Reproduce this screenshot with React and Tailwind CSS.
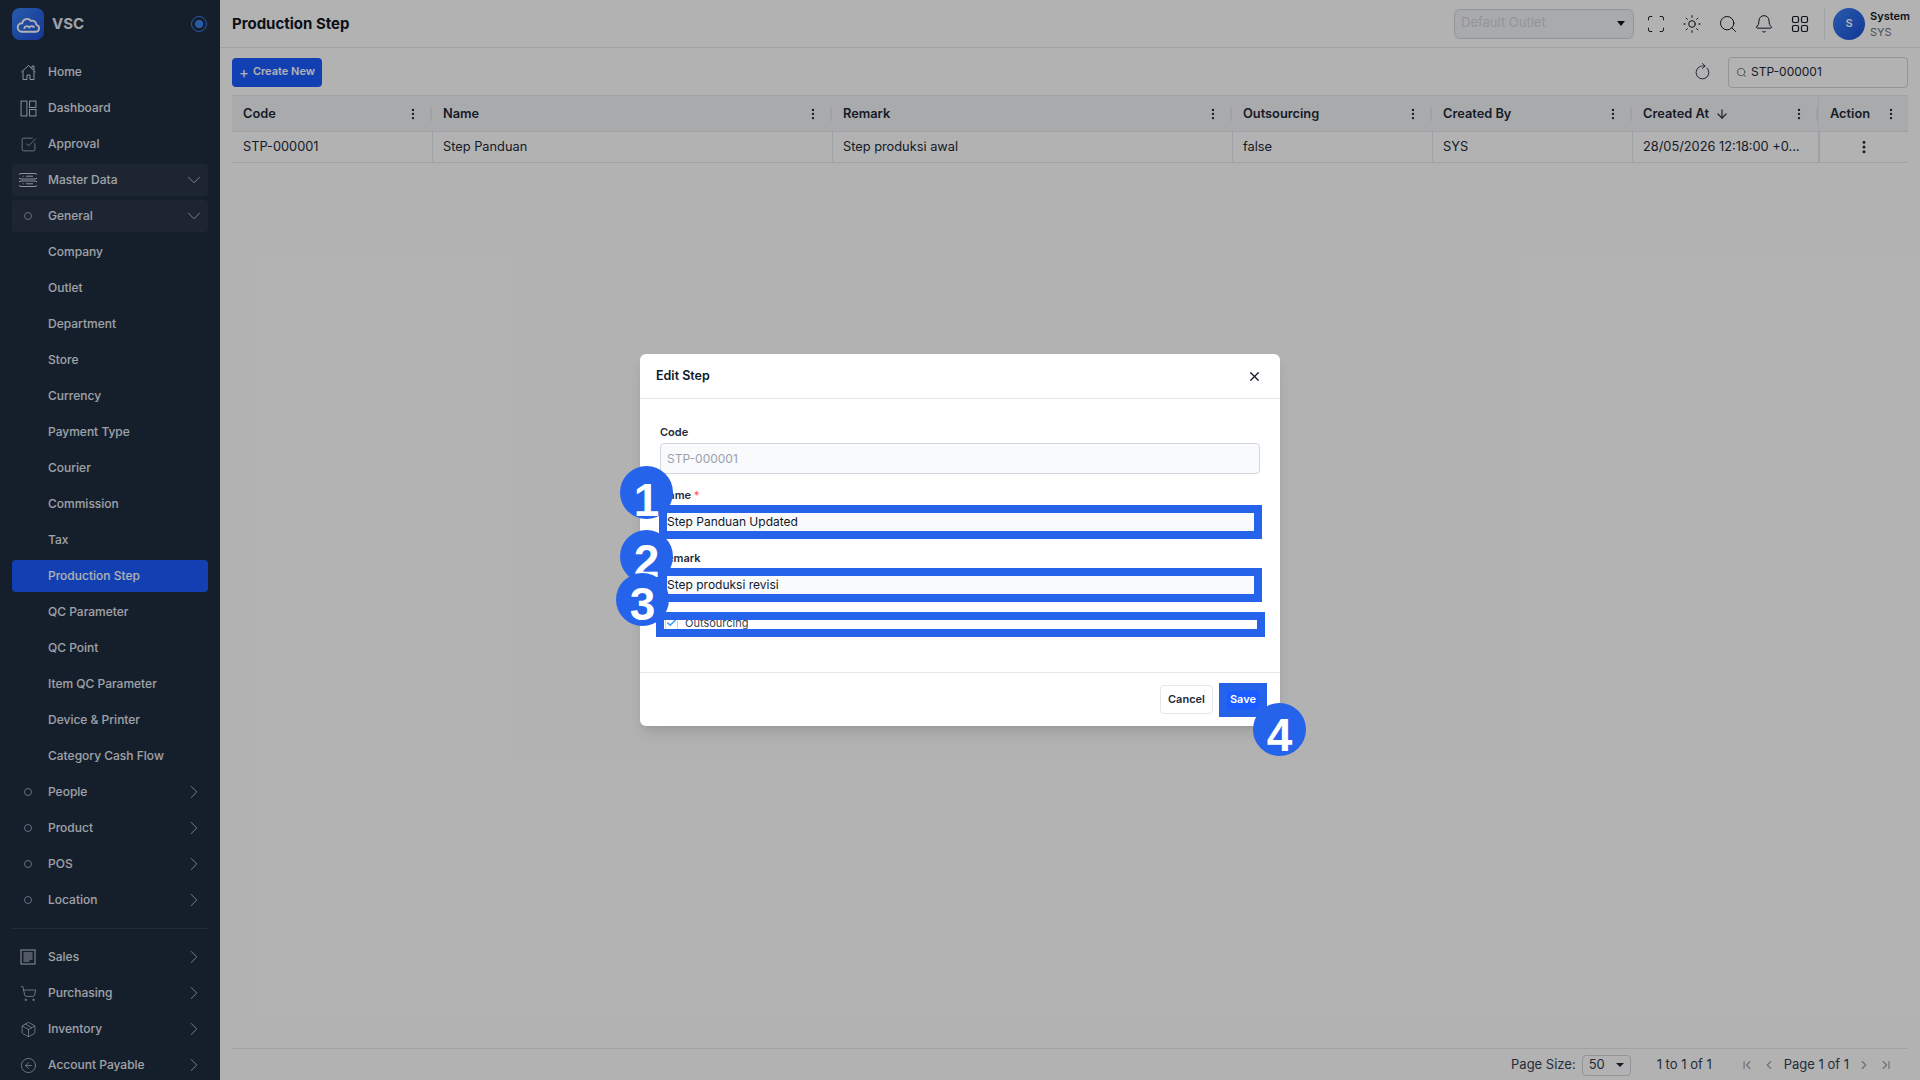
import {
  SquareCheckBig, ChevronDown, ChevronRight, ShoppingCart, Package, CircleArrowLeft,
  Scan, Sun, Search, Bell, RotateCw, EllipsisVertical, ArrowDown, X, ChevronLeft, ChevronFirst, ChevronLast, Check,
} from "lucide-react";

const font = { fontFamily: "Inter, sans-serif" };

function Logo() {
  return (
    <div className="w-8 h-8 rounded-lg bg-gradient-to-br from-[#3b82f6] to-[#1d4ed8] flex items-center justify-center">
      <svg width="25" height="25" viewBox="0 0 24 24" fill="none" stroke="white" strokeWidth="1.800" strokeLinejoin="round" strokeLinecap="round">
        <path d="M5.500 19h13a3.400 3.400 0 0 0 1-6.700 4 4 0 0 0-5.200-3.800 4.600 4.600 0 0 0-8.300 2.300A3.600 3.600 0 0 0 5.500 19Z" />
        <path d="M8 15.500c.800-2.300 3.600-2.500 4.700-.600 1-1.600 3.300-1.900 4.500-.400" />
      </svg>
    </div>
  );
}

function HomeIcon() {
  return (
    <svg width="17" height="17" viewBox="0 0 17 17" fill="none" stroke="currentColor" strokeWidth="1">
      <path d="M1.500 8 8.500 1.500 15.500 8" />
      <path d="M3 7v8.500h4v-4.500h3v4.500h4V7" />
      <path d="M12 4.500V2h2v4" />
    </svg>
  );
}

function PanelsIcon() {
  return (
    <svg width="17" height="17" viewBox="0 0 16 16" fill="none" stroke="currentColor" strokeWidth="0.900">
      <rect x="1" y="1" width="5.500" height="14" />
      <rect x="9" y="1" width="6" height="6" />
      <rect x="9" y="9" width="6" height="6" />
    </svg>
  );
}

function ServerIcon() {
  return (
    <svg width="18" height="18" viewBox="0 0 18 18" fill="none" stroke="currentColor" strokeWidth="1">
      <path d="M2 2.500h14a1 1 0 0 1 0 5.500H2a1 1 0 0 1 0-5.500Z" />
      <path d="M2 10h14a1 1 0 0 1 0 5.500H2a1 1 0 0 1 0-5.500Z" />
      <path d="M3.500 5.200h1M3.500 12.800h1M7 5.200h7M7 12.800h7" />
    </svg>
  );
}

function SalesIcon() {
  return (
    <svg width="16" height="16" viewBox="0 0 16 16" fill="none" stroke="currentColor" strokeWidth="1">
      <rect x="1" y="1" width="14" height="14" />
      <path d="M3.500 4h9M3.500 6h9M3.500 8h9M3.500 10h9M3.500 12h6" />
    </svg>
  );
}

const Dot = () => <span className="block w-[8px] h-[8px] rounded-full border border-slate-400" />;

const sub = ["Company", "Outlet", "Department", "Store", "Currency", "Payment Type", "Courier", "Commission", "Tax", "Production Step", "QC Parameter", "QC Point", "Item QC Parameter", "Device & Printer", "Category Cash Flow"];

function Item({ icon, label, chevron, open, active }) {
  return (
    <div className={`h-8 mb-1 mx-3 rounded flex items-center text-[12px] font-medium ${active ? "bg-[#1a5cff] text-white" : open ? "bg-[#2a3648] text-slate-200" : "text-slate-200"}`}>
      <span className="w-8 mr-1 flex justify-center text-slate-300">{icon}</span>
      <span className="flex-1">{label}</span>
      {chevron === "down" && <ChevronDown size={22} strokeWidth={0.800} className="mr-[3px]" />}
      {chevron === "right" && <ChevronRight size={22} strokeWidth={0.800} className="mr-[3px]" />}
    </div>
  );
}

function Sidebar() {
  return (
    <aside className="w-[220px] shrink-0 h-full overflow-hidden bg-[#1f2b3e]">
      <div className="h-12 flex items-center pl-3 pr-[13px] gap-2">
        <Logo />
        <span className="flex-1 text-[15px] font-bold text-slate-200">VSC</span>
        <span className="w-4 h-4 rounded-full border border-[#3b82f6] flex items-center justify-center">
          <span className="w-2 h-2 rounded-full bg-[#3b82f6]" />
        </span>
      </div>
      <div className="pt-[8px]">
        <Item icon={<HomeIcon />} label="Home" />
        <Item icon={<PanelsIcon />} label="Dashboard" />
        <Item icon={<SquareCheckBig size={17} strokeWidth={1} />} label="Approval" />
        <Item icon={<ServerIcon />} label="Master Data" chevron="down" open />
        <Item icon={<Dot />} label="General" chevron="down" open />
        {sub.map((s) => (
          <Item key={s} label={s} active={s === "Production Step"} />
        ))}
        {["People", "Product", "POS", "Location"].map((s) => (
          <Item key={s} icon={<Dot />} label={s} chevron="right" />
        ))}
        <div className="mx-3 mt-[12px] mb-[12px] border-t border-[#344054]" />
        <Item icon={<SalesIcon />} label="Sales" chevron="right" />
        <Item icon={<ShoppingCart size={17} strokeWidth={1} />} label="Purchasing" chevron="right" />
        <Item icon={<Package size={17} strokeWidth={1} />} label="Inventory" chevron="right" />
        <Item icon={<CircleArrowLeft size={17} strokeWidth={1} />} label="Account Payable" chevron="right" />
      </div>
    </aside>
  );
}

function Topbar() {
  return (
    <header className="h-12 shrink-0 border-b border-gray-200 flex items-center pl-3 pr-3">
      <h1 className="flex-1 mt-[1px] text-[15px] font-bold text-[#111827]">Production Step</h1>
      <div className="w-[180px] h-[30px] rounded-md border border-gray-300 bg-gray-100 flex items-center justify-between pl-[6px] pr-2 text-[13px] text-gray-300">
        <span className="-mt-[2px]">Default Outlet</span>
        <span className="w-0 h-0 border-x-4 border-x-transparent border-t-[5px] border-t-gray-900" />
      </div>
      <div className="flex items-center gap-4 ml-[12px] text-gray-900">
        <Scan size={20} strokeWidth={1.200} />
        <Sun size={20} strokeWidth={1.200} />
        <Search size={20} strokeWidth={1.200} />
        <Bell size={20} strokeWidth={1.200} />
        <svg width="20" height="20" viewBox="0 0 20 20" fill="none" stroke="currentColor" strokeWidth="1.200">
          <rect x="2.500" y="2.500" width="6" height="6" rx="1.500" />
          <rect x="11.500" y="2.500" width="6" height="6" rx="1.500" />
          <rect x="2.500" y="11.500" width="6" height="6" rx="1.500" />
          <rect x="11.500" y="11.500" width="6" height="6" rx="1.500" />
        </svg>
      </div>
      <div className="ml-[14px] pl-[8px] border-l border-gray-200 h-8 flex items-center">
        <span className="w-8 h-8 rounded-full bg-gradient-to-br from-[#3b82f6] to-[#1d4ed8] text-white text-[11px] font-semibold flex items-center justify-center">S</span>
        <div className="ml-[5px] w-[38px] whitespace-nowrap leading-[16px] text-[11px]">
          <div className="font-semibold text-gray-900">System</div>
          <div className="text-gray-500">SYS</div>
        </div>
      </div>
    </header>
  );
}

const cols = [
  { name: "Code", w: "w-[200px]", val: "STP-000001" },
  { name: "Name", w: "w-[400px]", val: "Step Panduan" },
  { name: "Remark", w: "w-[400px]", val: "Step produksi awal" },
  { name: "Outsourcing", w: "w-[200px]", val: "false" },
  { name: "Created By", w: "w-[200px]", val: "SYS" },
  { name: "Created At", w: "w-[186px]", val: "28/05/2026 12:18:00 +0...", sort: true },
];

function Table() {
  return (
    <div className="flex-1 text-[12.800px] text-gray-800">
      <div className="h-[37px] flex bg-gray-100 border-y border-gray-200 font-semibold">
        {cols.map((c) => (
          <div key={c.name} className={`${c.w} flex items-center pl-[11px]`}>
            <span className="flex-1 flex items-center gap-[6px]">
              {c.name}
              {c.sort && <ArrowDown size={14} />}
            </span>
            <EllipsisVertical size={14} />
            <span className="ml-[10px] w-[2px] h-[14px] bg-gray-200" />
          </div>
        ))}
        <div className="flex-1 flex items-center pl-[11px] pr-[10px] border-l border-gray-200">
          <span className="flex-1">Action</span>
          <EllipsisVertical size={14} />
        </div>
      </div>
      <div className="h-[31px] flex border-b border-gray-200">
        {cols.map((c, i) => (
          <div key={c.name} className={`${c.w} flex items-center ${i > 0 ? "pl-[10px] border-l border-gray-200" : "pl-[11px]"}`}>
            {c.val}
          </div>
        ))}
        <div className="flex-1 flex items-center justify-center border-l-2 border-gray-200">
          <EllipsisVertical size={16} strokeWidth={2.500} />
        </div>
      </div>
    </div>
  );
}

function Pager() {
  return (
    <div className="h-8 shrink-0 pt-[1px] border-t border-gray-200 flex items-center justify-end text-[13px] text-gray-700 pr-[15px]">
      Page Size:
      <span className="ml-[6px] w-[49px] h-[21px] border border-gray-300 rounded flex items-center justify-between px-[6px]">
        50
        <span className="w-0 h-0 border-x-[4px] border-x-transparent border-t-[4px] border-t-gray-800" />
      </span>
      <span className="ml-[26px]">1 to 1 of 1</span>
      <span className="ml-[28px] text-gray-400">
        <ChevronFirst size={14} />
      </span>
      <span className="ml-[8px] text-gray-400">
        <ChevronLeft size={14} />
      </span>
      <span className="ml-[8px]">Page 1 of 1</span>
      <span className="ml-[8px] text-gray-400">
        <ChevronRight size={14} />
      </span>
      <span className="ml-[8px] text-gray-400">
        <ChevronLast size={14} />
      </span>
    </div>
  );
}

function Field({ label, value, required, disabled }) {
  return (
    <div className="mb-[13px]">
      <label className="block h-4 mb-[3px] text-[11px] leading-4 font-semibold text-gray-800">
        {label}
        {required && <span className="text-red-400"> *</span>}
      </label>
      <div className={`h-[31px] pt-[1px] px-[6px] rounded border border-gray-300 flex items-center text-[12px] ${disabled ? "bg-gray-50 text-gray-400" : "bg-[#f8fafc] text-gray-900"}`}>
        {value}
      </div>
    </div>
  );
}

function Badge({ n, pos }) {
  return (
    <div className={`absolute w-[53px] h-[53px] rounded-full bg-[#2563eb] text-white text-[46px] font-bold flex items-center justify-center ${pos}`} style={{ fontFamily: '"Liberation Sans", sans-serif' }}>
      {n}
    </div>
  );
}

function Modal() {
  return (
    <div className="relative w-[640px] bg-white rounded-md shadow-lg">
      <div className="h-[45px] pl-4 pr-[18px] border-b border-gray-200 flex items-center justify-between text-[12.500px] font-semibold text-gray-900">
        Edit Step
        <X size={15} />
      </div>
      <div className="px-5 pt-[25px] h-[273px]">
        <Field label="Code" value="STP-000001" disabled />
        <Field label="Name" value="Step Panduan Updated" required />
        <Field label="Remark" value="Step produksi revisi" />
        <div className="flex items-center pl-[5px] h-[20px] text-[11px] text-gray-700">
          <span className="w-[13px] h-[13px] bg-white border border-gray-300 flex items-center justify-center">
            <Check size={12} strokeWidth={3.500} className="text-[#3b9bf6]" />
          </span>
          <span className="ml-[7px]">Outsourcing</span>
        </div>
      </div>
      <div className="h-[54px] border-t border-gray-200 flex items-start justify-end gap-[6px] pt-[12px] pr-[13px] text-[11px] font-semibold">
        <button className="w-[53px] h-[29px] rounded border border-gray-200 text-gray-800">Cancel</button>
        <button className="w-[48px] h-[29px] rounded bg-[#1a5cff] text-white">Save</button>
      </div>

      <div className="absolute left-[19px] top-[151px] w-[603px] h-[34px] border-8 border-[#2563eb]" />
      <div className="absolute left-[19px] top-[214px] w-[603px] h-[34px] border-8 border-[#2563eb]" />
      <div className="absolute left-[16px] top-[258px] w-[609px] h-[25px] border-8 border-[#2563eb]" />
      <div className="absolute left-[579px] top-[329px] w-[48px] h-[34px] border-8 border-[#2563eb]" />
      <Badge n="1" pos="left-[-20px] top-[112px] pt-[16px]" />
      <Badge n="2" pos="left-[-20px] top-[176px] pt-[9px]" />
      <Badge n="3" pos="left-[-24px] top-[219px] pt-[10px]" />
      <Badge n="4" pos="left-[613px] top-[349px] pt-3" />
    </div>
  );
}

export default function App() {
  return (
    <div className="relative h-screen flex overflow-hidden bg-white" style={font}>
      <Sidebar />
      <main className="flex-1 min-w-0 flex flex-col">
        <Topbar />
        <div className="flex-1 flex flex-col pl-3 pr-3 pt-[9px]">
          <div className="flex items-center justify-between h-[30px] mb-[8px]">
            <button className="w-[90px] h-[29px] rounded bg-[#1a5cff] text-white text-[11px] font-semibold flex items-center justify-center gap-1">
              <span className="text-[15px] font-normal leading-none">+</span>
              <span className="-mt-[1px]">Create New</span>
            </button>
            <div className="flex items-center gap-[17px]">
              <RotateCw size={17} strokeWidth={1.200} className="text-gray-800 -rotate-45" />
              <div className="w-[180px] h-[31px] rounded border border-gray-300 flex items-center pl-[7px] gap-[4px] text-[12px] text-gray-800">
                <Search size={11} className="text-gray-500" />
                STP-000001
              </div>
            </div>
          </div>
          <Table />
          <Pager />
        </div>
      </main>
      <div className="absolute inset-0 bg-black/30 flex items-center justify-center">
        <Modal />
      </div>
    </div>
  );
}
